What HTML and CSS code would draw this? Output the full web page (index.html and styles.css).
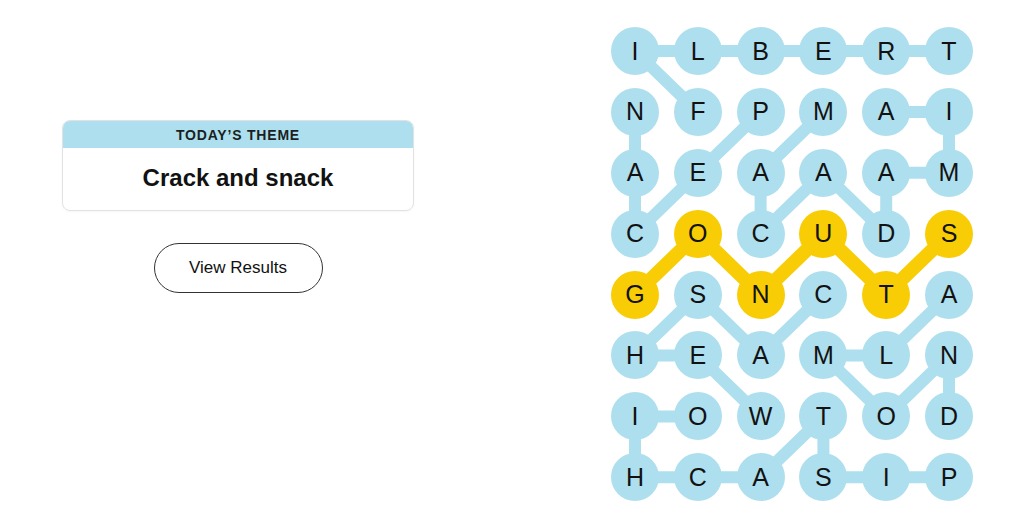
FILE: index.html
```html
<!DOCTYPE html>
<html lang="en">
<head>
    <meta charset="UTF-8">
    <meta name="viewport" content="width=device-width, initial-scale=1.0">
    <title>Strands</title>
    <link rel="stylesheet" href="styles.css">
</head>
<body>
    <div class="page">
        <div class="info">
            <div class="theme-card">
                <div class="theme-label">Today&rsquo;s Theme</div>
                <div class="theme-title">Crack and snack</div>
            </div>
            <button class="results-btn">View Results</button>
        </div>

        <div class="board">
            <!-- word paths drawn behind the letters -->
            <svg class="paths" viewBox="0 0 362 474.3" width="362" height="474.3">
                <g class="path-found">
                    <polyline points="86.8,84.9 24,24 86.8,24 149.6,24 212.4,24 275.2,24 338,24"/>
                    <polyline points="149.6,84.9 86.8,145.8 24,206.7 24,145.8 24,84.9"/>
                    <polyline points="212.4,84.9 149.6,145.8 149.6,206.7 212.4,145.8 275.2,206.7 275.2,145.8 338,145.8 338,84.9 275.2,84.9"/>
                    <polyline points="212.4,267.6 149.6,328.5 86.8,267.6 24,328.5 86.8,328.5 149.6,389.4"/>
                    <polyline points="338,267.6 275.2,328.5 212.4,328.5 275.2,389.4 338,328.5 338,389.4"/>
                    <polyline points="338,450.3 275.2,450.3 212.4,450.3 212.4,389.4 149.6,450.3 86.8,450.3 24,450.3 24,389.4 86.8,389.4"/>
                </g>
                <polyline class="path-span" points="24,267.6 86.8,206.7 149.6,267.6 212.4,206.7 275.2,267.6 338,206.7"/>
            </svg>

            <div class="cell">I</div><div class="cell">L</div><div class="cell">B</div><div class="cell">E</div><div class="cell">R</div><div class="cell">T</div>
            <div class="cell">N</div><div class="cell">F</div><div class="cell">P</div><div class="cell">M</div><div class="cell">A</div><div class="cell">I</div>
            <div class="cell">A</div><div class="cell">E</div><div class="cell">A</div><div class="cell">A</div><div class="cell">A</div><div class="cell">M</div>
            <div class="cell">C</div><div class="cell span">O</div><div class="cell">C</div><div class="cell span">U</div><div class="cell">D</div><div class="cell span">S</div>
            <div class="cell span">G</div><div class="cell">S</div><div class="cell span">N</div><div class="cell">C</div><div class="cell span">T</div><div class="cell">A</div>
            <div class="cell">H</div><div class="cell">E</div><div class="cell">A</div><div class="cell">M</div><div class="cell">L</div><div class="cell">N</div>
            <div class="cell">I</div><div class="cell">O</div><div class="cell">W</div><div class="cell">T</div><div class="cell">O</div><div class="cell">D</div>
            <div class="cell">H</div><div class="cell">C</div><div class="cell">A</div><div class="cell">S</div><div class="cell">I</div><div class="cell">P</div>
        </div>
    </div>
</body>
</html>
```

FILE: styles.css
```css
body {
    margin: 0;
    background: #fff;
    color: #121212;
    font-family: "Liberation Sans", Arial, sans-serif;
}
.page {
    display: flex;
    height: 524px;
    overflow: hidden;
}
.info {
    width: 476px;
    padding-top: 120px;
    display: flex;
    flex-direction: column;
    align-items: center;
    gap: 32px;
}
.theme-card {
    width: 352px;
    box-sizing: border-box;
    border: 1px solid #e2e2e2;
    border-radius: 8px;
    overflow: hidden;
    box-shadow: 0 1px 2px rgba(0, 0, 0, 0.04);
}
.theme-label {
    background: #aedfee;
    height: 27px;
    line-height: 28px;
    text-align: center;
    text-transform: uppercase;
    font-size: 14px;
    font-weight: bold;
    letter-spacing: 0.8px;
    color: #1a1f22;
}
.theme-title {
    height: 62px;
    line-height: 60px;
    text-align: center;
    font-size: 24px;
    font-weight: bold;
}
.results-btn {
    width: 169px;
    height: 50px;
    background: #fff;
    border: 1px solid #333;
    border-radius: 25px;
    font-family: inherit;
    font-size: 17px;
    color: #121212;
    cursor: pointer;
}
.board {
    position: relative;
    margin: 27px 0 0 135px;
    width: 362px;
    height: 474.3px;
    display: grid;
    grid-template-columns: repeat(6, 48px);
    grid-auto-rows: 48px;
    column-gap: 14.8px;
    row-gap: 12.9px;
}
.paths {
    position: absolute;
    left: 0;
    top: 0;
    z-index: 0;
}
.paths polyline {
    fill: none;
    stroke-linecap: round;
    stroke-linejoin: round;
}
.path-found polyline {
    stroke: #aedfee;
    stroke-width: 12;
}
.path-span {
    stroke: #f8cd05;
    stroke-width: 14;
}
.cell {
    position: relative;
    z-index: 1;
    width: 48px;
    height: 48px;
    border-radius: 50%;
    background: #aedfee;
    display: flex;
    align-items: center;
    justify-content: center;
    font-size: 25px;
    color: #121212;
}
.cell.span {
    background: #f8cd05;
}
```
